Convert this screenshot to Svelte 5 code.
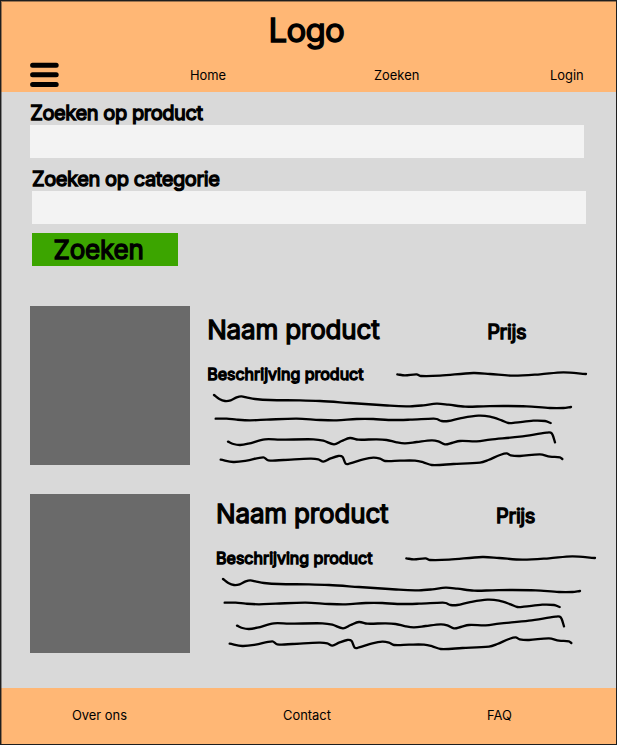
<script>
  const menu = ['Home', 'Zoeken', 'Login'];
  const footerLinks = ['Over ons', 'Contact', 'FAQ'];
  const products = [1, 2];

  // Hand-drawn scribbles, three units to a pixel.
  const scribbles = [
    [592,208,615,211,650,208,663,213,720,212,820,204,870,207,940,212,1020,208,1090,202,1158,207],
    [42,270,58,282,75,288,92,286,110,277,124,274,142,278,165,282,210,285,300,286,360,288,450,294,540,300,570,302,630,304,670,301,710,296,745,299,795,305,850,304,910,303,980,304,1050,309,1090,309,1113,306],
    [47,341,80,341,110,344,150,346,200,344,290,341,360,345,410,346,470,342,520,342,565,345,630,344,700,341,710,342,725,348,745,348,780,340,835,332,870,335,905,346,925,354,945,353,1000,347,1035,348,1052,354],
    [84,410,100,417,120,420,145,416,195,403,240,404,340,403,370,407,402,418,425,408,450,399,475,404,530,403,560,405,590,412,615,415,650,411,695,406,715,409,735,418,755,414,780,408,830,409,870,404,960,395,1040,383,1052,383,1058,390,1065,412],
    [62,464,100,471,140,467,190,457,205,466,250,465,330,461,355,463,370,470,390,461,415,453,428,456,437,476,450,475,490,463,520,458,540,461,555,468,600,467,645,467,670,472,695,480,760,477,840,473,865,465,900,450,920,445,932,451,960,453,1020,448,1050,455,1080,457,1087,462]
  ];

  // Smooth curve through the points, with handles limited to each segment's length.
  function curve(flat) {
    const p = [];
    for (let i = 0; i < flat.length; i += 2) p.push([flat[i], flat[i + 1]]);
    const slope = p.map((_, i) => {
      const a = p[Math.max(i - 1, 0)];
      const b = p[Math.min(i + 1, p.length - 1)];
      return (b[1] - a[1]) / (b[0] - a[0]);
    });
    let d = `M${p[0]}`;
    for (let i = 1; i < p.length; i++) {
      const h = (p[i][0] - p[i - 1][0]) / 3;
      d += `C${p[i - 1][0] + h} ${p[i - 1][1] + h * slope[i - 1]} ${p[i][0] - h} ${p[i][1] - h * slope[i]} ${p[i]}`;
    }
    return d;
  }
  const lines = scribbles.map(curve);
</script>

<div class="page">
  <header>
    <div class="logo">Logo</div>
    <nav>
      <svg class="burger" width="29" height="26" viewBox="0 0 29 26" aria-label="Menu">
        <path d="M2.6 3.2H26.2M2.6 12.8H26.2M2.6 22.4H26.2" />
      </svg>
      {#each menu as item}<a href="#top">{item}</a>{/each}
    </nav>
  </header>

  <main>
    <form>
      <label for="product">Zoeken op product</label>
      <div class="field" id="product"></div>
      <div class="second">
        <label for="category">Zoeken op categorie</label>
        <div class="field" id="category"></div>
        <button type="button">Zoeken</button>
      </div>
    </form>

    <section>
      {#each products as n}
        <article class:shifted={n === 2}>
          <div class="photo"></div>
          <div class="info">
            <div class="top">
              <h2>Naam product</h2>
              <span class="price">Prijs</span>
            </div>
            <h3>Beschrijving product</h3>
            <svg class="scribble" width="400" height="165" viewBox="0 0 1200 495">
              {#each lines as d}<path {d} />{/each}
            </svg>
          </div>
        </article>
      {/each}
    </section>
  </main>

  <footer>
    {#each footerLinks as item}<a href="#top">{item}</a>{/each}
  </footer>
</div>

<style>
  :global(body) { margin: 0; }
  .page {
    position: relative;
    display: flex;
    flex-direction: column;
    width: 617px;
    height: 745px;
    overflow: hidden;
    box-sizing: border-box;
    background: #d9d9d9;
    color: #000;
    font-family: Inter, sans-serif;
  }
  .page::after {
    content: '';
    position: absolute;
    inset: 0;
    border: 1px solid #1e1e1e;
    box-shadow: inset 1px 1px 0 rgba(30, 30, 30, 0.45);
    pointer-events: none;
  }
  a { color: inherit; text-decoration: none; font-size: 12.9px; line-height: 22px; white-space: nowrap; }
  header { height: 91.5px; flex: none; background: #ffb775; }
  .logo {
    padding-left: 268.5px;
    font-size: 33px;
    line-height: 61px;
    height: 61px;
    letter-spacing: -0.7px;
    -webkit-text-stroke: 1.4px #000;
  }
  nav { display: grid; grid-template-columns: 160px 184px 176px 60px; padding-left: 30px; margin-top: 1px; }
  nav a { margin-top: 3px; }
  .burger { display: block; }
  .burger path { stroke: #000; stroke-width: 5; stroke-linecap: round; }

  form { padding: 9.5px 0 0 30.3px; height: 204.7px; }
  label {
    display: block;
    height: 23.6px;
    line-height: 24px;
    font-size: 20px;
    letter-spacing: -0.4px;
    -webkit-text-stroke: 1.3px #000;
  }
  .field { width: 553.7px; height: 33px; background: #f3f3f3; }
  .second { margin-left: 1.7px; padding-top: 9.4px; }
  button {
    display: block;
    width: 146.5px;
    height: 33px;
    margin: 9.3px 0 0;
    padding: 0 0 0 21.5px;
    border: 0;
    background: #3ca500;
    color: #000;
    font: 26px/33px Inter, sans-serif;
    letter-spacing: -0.2px;
    text-align: left;
    -webkit-text-stroke: 1.3px #000;
  }
  section { display: flex; flex-direction: column; gap: 29px; padding-left: 30.3px; }
  article { display: flex; height: 159.3px; }
  .photo { flex: none; width: 159.4px; height: 159.3px; background: #6a6a6a; }
  .info { position: relative; flex: 1; margin-left: 17.5px; }
  .shifted .info { margin-left: 26.4px; top: -4.2px; }
  .top { display: flex; padding-top: 8px; height: 44px; }
  h2, h3 { margin: 0; font-weight: 400; white-space: nowrap; }
  h2 { width: 280px; font-size: 26px; line-height: 32px; letter-spacing: -0.17px; -webkit-text-stroke: 1.3px #000; }
  .price { font-size: 20px; line-height: 36px; letter-spacing: -0.4px; -webkit-text-stroke: 1.3px #000; }
  h3 { font-size: 16px; line-height: 32px; -webkit-text-stroke: 1.3px #000; }
  .scribble { position: absolute; left: -7.1px; top: -0.7px; overflow: visible; }
  .scribble path { fill: none; stroke: #000; stroke-width: 7; stroke-linecap: round; stroke-linejoin: round; }

  footer {
    display: grid;
    grid-template-columns: 211px 204px 100px;
    align-items: center;
    margin-top: auto;
    flex: none;
    height: 57.3px;
    box-sizing: border-box;
    padding: 0 0 1px 72px;
    background: #ffb775;
  }
</style>
